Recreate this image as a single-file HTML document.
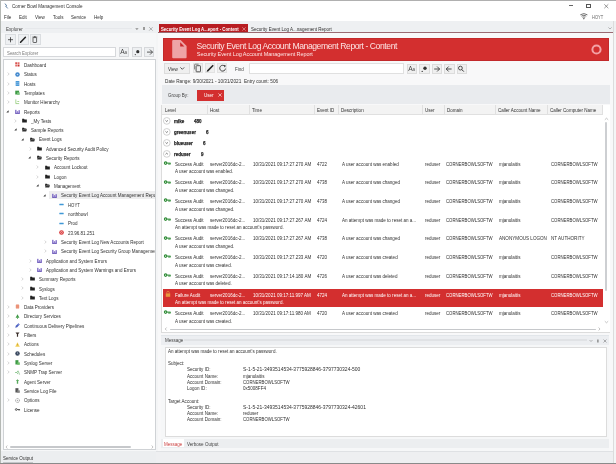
<!DOCTYPE html>
<html><head><meta charset="utf-8"><style>
html,body{margin:0;padding:0;width:616px;height:464px;overflow:hidden;background:#fff}
body{position:relative;font-family:"Liberation Sans", sans-serif}
body div, body svg{position:absolute}
body svg{overflow:visible}
.t{white-space:nowrap;line-height:1;transform-origin:0 0}
</style></head><body><div id="root" style="left:0;top:0;width:616px;height:464px;will-change:transform">
<div style="left:0px;top:0px;width:616px;height:20.6px;background:#fff"></div>
<svg style="left:3px;top:2px" width="6" height="8" viewBox="0 0 6 8"><path d="M2 1.6 L3.6 3.7 L2.7 4.1 L4.7 6.4" stroke="#4d7096" stroke-width="0.9" fill="none"/></svg>
<div class="t" style="left:11.70px;top:4.24px;font-size:5.6px;transform:scaleX(0.81);color:#303030;font-weight:normal;">Corner Bowl Management Console</div>
<div style="left:569.2px;top:5.3px;width:4.1px;height:0.6px;background:#666"></div>
<div style="left:586.3px;top:4.3px;width:4.6px;height:3.5px;border:0.55px solid #555;box-sizing:border-box"></div>
<svg style="left:604.3px;top:4.1px" width="5" height="5" viewBox="0 0 5 5"><path d="M0.3 0.3L4.3 4.2M4.3 0.3L0.3 4.2" stroke="#555" stroke-width="0.6"/></svg>
<div class="t" style="left:4.30px;top:15.44px;font-size:5.6px;transform:scaleX(0.81);color:#303030;font-weight:normal;">File</div>
<div class="t" style="left:19.10px;top:15.44px;font-size:5.6px;transform:scaleX(0.81);color:#303030;font-weight:normal;">Edit</div>
<div class="t" style="left:34.70px;top:15.44px;font-size:5.6px;transform:scaleX(0.81);color:#303030;font-weight:normal;">View</div>
<div class="t" style="left:52.60px;top:15.44px;font-size:5.6px;transform:scaleX(0.81);color:#303030;font-weight:normal;">Tools</div>
<div class="t" style="left:71.20px;top:15.44px;font-size:5.6px;transform:scaleX(0.81);color:#303030;font-weight:normal;">Service</div>
<div class="t" style="left:93.60px;top:15.44px;font-size:5.6px;transform:scaleX(0.81);color:#303030;font-weight:normal;">Help</div>
<svg style="left:579.8px;top:13.2px" width="8" height="7" viewBox="0 0 8 7"><path d="M0.3 1.8 Q3.85 -0.6 7.4 1.8" stroke="#333" stroke-width="0.7" fill="none"/><path d="M1.4 3.1 Q3.85 1.4 6.3 3.1" stroke="#333" stroke-width="0.7" fill="none"/><path d="M2.5 4.3 Q3.85 3.5 5.2 4.3" stroke="#333" stroke-width="0.7" fill="none"/><path d="M2.9 5.2 L3.85 6.4 L4.8 5.2 Z" fill="#333"/></svg>
<div class="t" style="left:591.60px;top:15.14px;font-size:5.6px;transform:scaleX(0.72);color:#666;font-weight:normal;">HOYT</div>
<div style="left:1px;top:20.6px;width:155px;height:443px;background:#f6f7f8"></div>
<div style="left:1px;top:20.6px;width:155px;height:12.2px;background:#eef0f2"></div>
<div class="t" style="left:5.50px;top:27.04px;font-size:5.6px;transform:scaleX(0.81);color:#444;font-weight:normal;">Explorer</div>
<div style="left:25px;top:27.6px;width:107px;height:1.6px;background:#e6e8eb"></div>
<svg style="left:135px;top:27.7px" width="4" height="3" viewBox="0 0 4 3"><path d="M0.2 0.3H3.6L1.9 2Z" fill="#8a8a8a"/></svg>
<div style="left:143px;top:26.7px;width:1.8px;height:3.3px;background:#9a9a9a"></div>
<svg style="left:149.2px;top:26.7px" width="4" height="4" viewBox="0 0 4 4"><path d="M0.2 0.2L3.6 3.6M3.6 0.2L0.2 3.6" stroke="#777" stroke-width="0.55"/></svg>
<div style="left:5.3px;top:34px;width:10.5px;height:10.6px;background:#eef0f2;border:0.6px solid #dadde0;box-sizing:border-box"></div>
<div style="left:18px;top:34px;width:10.5px;height:10.6px;background:#eef0f2;border:0.6px solid #dadde0;box-sizing:border-box"></div>
<div style="left:30.3px;top:34px;width:10.5px;height:10.6px;background:#eef0f2;border:0.6px solid #dadde0;box-sizing:border-box"></div>
<svg style="left:5.3px;top:34px" width="36" height="11" viewBox="0 0 36 11"><path d="M5.5 3.2V8.3M3 5.7H8" stroke="#333" stroke-width="0.8"/><path d="M15.6 8.2L20.4 3.3" stroke="#222" stroke-width="1.5" stroke-linecap="round"/><path d="M14.9 8.9L15.3 7.6L16.2 8.5Z" fill="#222"/><rect x="28" y="3.6" width="3.6" height="4.9" rx="0.5" fill="none" stroke="#444" stroke-width="0.8"/><path d="M27.3 3.1H32.3M28.9 2.5H30.7" stroke="#444" stroke-width="0.7"/></svg>
<div style="left:3px;top:47.3px;width:113px;height:10.2px;background:#fff;border:0.6px solid #d6d8db;box-sizing:border-box"></div>
<div class="t" style="left:7.00px;top:50.54px;font-size:5.6px;transform:scaleX(0.78);color:#7a7a7a;font-weight:normal;">Search Explorer</div>
<div style="left:118.5px;top:47px;width:10.5px;height:10.2px;background:#eef0f2;border:0.6px solid #d6d8db;box-sizing:border-box"></div>
<div style="left:131.5px;top:47px;width:10.5px;height:10.2px;background:#eef0f2;border:0.6px solid #d6d8db;box-sizing:border-box"></div>
<div style="left:143.5px;top:47px;width:10.5px;height:10.2px;background:#eef0f2;border:0.6px solid #d6d8db;box-sizing:border-box"></div>
<svg style="left:118.5px;top:47px" width="11" height="10" viewBox="0 0 11 10"><text x="1.3" y="7.4" font-family="Liberation Sans" font-size="6.6" fill="#444">A</text><text x="5.6" y="7.4" font-family="Liberation Sans" font-size="4.6" fill="#555">a</text></svg>
<svg style="left:131.5px;top:47px" width="23" height="11" viewBox="0 0 23 11"><circle cx="5.8" cy="4.7" r="1.6" fill="#333"/><circle cx="3.3" cy="7.6" r="0.6" fill="#333"/><path d="M15 5.1H20.5M18 2.6L20.5 5.1L18 7.6" stroke="#333" stroke-width="0.8" fill="none"/></svg>
<div style="left:2.8px;top:59.3px;width:152.8px;height:391.2px;background:#fff;border:0.7px solid #cfd2d5;box-sizing:border-box"></div>
<div style="left:3.6px;top:60px;width:151.3px;height:386px;overflow:hidden">
<svg style="left:11.50px;top:2.20px" width="5" height="5" viewBox="0 0 6 6"><rect x="0.3" y="0.3" width="2.3" height="2.3" fill="#d9534f"/><rect x="3.1" y="0.3" width="2.3" height="2.3" fill="#e06b67"/><rect x="0.3" y="3.1" width="2.3" height="2.3" fill="#e06b67"/><rect x="3.1" y="3.1" width="2.3" height="2.3" fill="#c9302c"/></svg>
<div class="t" style="left:20.40px;top:2.94px;font-size:5.6px;transform:scaleX(0.81);color:#303030;font-weight:normal;white-space:nowrap">Dashboard</div>
<svg style="left:3.00px;top:12.22px" width="3" height="4" viewBox="0 0 3 4"><path d="M0.6 0.6L2.2 2L0.6 3.4" fill="none" stroke="#b0b0b0" stroke-width="0.5"/></svg>
<svg style="left:11.50px;top:11.52px" width="5" height="5" viewBox="0 0 6 6"><circle cx="3" cy="3" r="2.7" fill="#3f86cc"/><circle cx="3" cy="3" r="1" fill="#b8d6f2"/></svg>
<div class="t" style="left:20.40px;top:12.26px;font-size:5.6px;transform:scaleX(0.81);color:#303030;font-weight:normal;white-space:nowrap">Status</div>
<svg style="left:3.00px;top:21.53px" width="3" height="4" viewBox="0 0 3 4"><path d="M0.6 0.6L2.2 2L0.6 3.4" fill="none" stroke="#b0b0b0" stroke-width="0.5"/></svg>
<svg style="left:11.50px;top:20.83px" width="5" height="5" viewBox="0 0 6 6"><rect x="0.8" y="0" width="4.4" height="6" fill="#4a9ad8"/><path d="M0.8 2H5.2M0.8 4H5.2" stroke="#c8e2f6" stroke-width="0.5"/></svg>
<div class="t" style="left:20.40px;top:21.57px;font-size:5.6px;transform:scaleX(0.81);color:#303030;font-weight:normal;white-space:nowrap">Hosts</div>
<svg style="left:3.00px;top:30.85px" width="3" height="4" viewBox="0 0 3 4"><path d="M0.6 0.6L2.2 2L0.6 3.4" fill="none" stroke="#b0b0b0" stroke-width="0.5"/></svg>
<svg style="left:11.50px;top:30.15px" width="5" height="5" viewBox="0 0 6 6"><rect x="0.3" y="0.8" width="4.6" height="4.6" fill="#3f9a46"/><rect x="2.5" y="2.8" width="3.2" height="3" fill="#7cc47f"/></svg>
<div class="t" style="left:20.40px;top:30.89px;font-size:5.6px;transform:scaleX(0.81);color:#303030;font-weight:normal;white-space:nowrap">Templates</div>
<svg style="left:3.00px;top:40.16px" width="3" height="4" viewBox="0 0 3 4"><path d="M0.6 0.6L2.2 2L0.6 3.4" fill="none" stroke="#b0b0b0" stroke-width="0.5"/></svg>
<svg style="left:11.50px;top:39.46px" width="5" height="5" viewBox="0 0 6 6"><path d="M1 0.5V5.5H5M2.8 3H5" stroke="#7bbf5e" stroke-width="0.8" fill="none"/></svg>
<div class="t" style="left:20.40px;top:40.20px;font-size:5.6px;transform:scaleX(0.81);color:#303030;font-weight:normal;white-space:nowrap">Monitor Hierarchy</div>
<svg style="left:2.70px;top:49.78px" width="3" height="3" viewBox="0 0 3 3"><path d="M2.6 0.3V2.6H0.3Z" fill="#333"/></svg>
<svg style="left:11.50px;top:48.78px" width="5" height="5" viewBox="0 0 6 6"><rect x="0.2" y="4.6" width="5.6" height="1.2" fill="#5e4bb0"/><rect x="0.3" y="1" width="1.4" height="4" fill="#6a55bd"/><rect x="2.3" y="2.6" width="1.4" height="2.4" fill="#8f7bd2"/><rect x="4.3" y="1.4" width="1.4" height="3.6" fill="#6a55bd"/></svg>
<div class="t" style="left:20.40px;top:49.52px;font-size:5.6px;transform:scaleX(0.81);color:#303030;font-weight:normal;white-space:nowrap">Reports</div>
<svg style="left:10.40px;top:58.80px" width="3" height="4" viewBox="0 0 3 4"><path d="M0.6 0.6L2.2 2L0.6 3.4" fill="none" stroke="#b0b0b0" stroke-width="0.5"/></svg>
<svg style="left:18.90px;top:58.10px" width="5" height="5" viewBox="0 0 6 6"><path d="M0.2 1H2.4L3 1.8H5.8V5.4H0.2Z" fill="#222"/></svg>
<div class="t" style="left:27.80px;top:58.84px;font-size:5.6px;transform:scaleX(0.81);color:#303030;font-weight:normal;white-space:nowrap">_My Tests</div>
<svg style="left:10.10px;top:68.41px" width="3" height="3" viewBox="0 0 3 3"><path d="M2.6 0.3V2.6H0.3Z" fill="#333"/></svg>
<svg style="left:18.90px;top:67.41px" width="5" height="5" viewBox="0 0 6 6"><path d="M0.2 1H2.4L3 1.8H5.2V2.6H1.4L0.2 5.4Z" fill="#222"/><path d="M1.4 2.8H6L5 5.4H0.2Z" fill="#333"/></svg>
<div class="t" style="left:27.80px;top:68.15px;font-size:5.6px;transform:scaleX(0.81);color:#303030;font-weight:normal;white-space:nowrap">Sample Reports</div>
<svg style="left:17.50px;top:77.73px" width="3" height="3" viewBox="0 0 3 3"><path d="M2.6 0.3V2.6H0.3Z" fill="#333"/></svg>
<svg style="left:26.30px;top:76.73px" width="5" height="5" viewBox="0 0 6 6"><path d="M0.2 1H2.4L3 1.8H5.2V2.6H1.4L0.2 5.4Z" fill="#222"/><path d="M1.4 2.8H6L5 5.4H0.2Z" fill="#333"/></svg>
<div class="t" style="left:35.20px;top:77.47px;font-size:5.6px;transform:scaleX(0.81);color:#303030;font-weight:normal;white-space:nowrap">Event Logs</div>
<svg style="left:25.20px;top:86.74px" width="3" height="4" viewBox="0 0 3 4"><path d="M0.6 0.6L2.2 2L0.6 3.4" fill="none" stroke="#b0b0b0" stroke-width="0.5"/></svg>
<svg style="left:33.70px;top:86.04px" width="5" height="5" viewBox="0 0 6 6"><path d="M0.2 1H2.4L3 1.8H5.8V5.4H0.2Z" fill="#222"/></svg>
<div class="t" style="left:42.60px;top:86.78px;font-size:5.6px;transform:scaleX(0.81);color:#303030;font-weight:normal;white-space:nowrap">Advanced Security Audit Policy</div>
<svg style="left:24.90px;top:96.36px" width="3" height="3" viewBox="0 0 3 3"><path d="M2.6 0.3V2.6H0.3Z" fill="#333"/></svg>
<svg style="left:33.70px;top:95.36px" width="5" height="5" viewBox="0 0 6 6"><path d="M0.2 1H2.4L3 1.8H5.2V2.6H1.4L0.2 5.4Z" fill="#222"/><path d="M1.4 2.8H6L5 5.4H0.2Z" fill="#333"/></svg>
<div class="t" style="left:42.60px;top:96.10px;font-size:5.6px;transform:scaleX(0.81);color:#303030;font-weight:normal;white-space:nowrap">Security Reports</div>
<svg style="left:32.60px;top:105.38px" width="3" height="4" viewBox="0 0 3 4"><path d="M0.6 0.6L2.2 2L0.6 3.4" fill="none" stroke="#b0b0b0" stroke-width="0.5"/></svg>
<svg style="left:41.10px;top:104.68px" width="5" height="5" viewBox="0 0 6 6"><path d="M0.2 1H2.4L3 1.8H5.8V5.4H0.2Z" fill="#222"/></svg>
<div class="t" style="left:50.00px;top:105.42px;font-size:5.6px;transform:scaleX(0.81);color:#303030;font-weight:normal;white-space:nowrap">Account Lockout</div>
<svg style="left:32.60px;top:114.69px" width="3" height="4" viewBox="0 0 3 4"><path d="M0.6 0.6L2.2 2L0.6 3.4" fill="none" stroke="#b0b0b0" stroke-width="0.5"/></svg>
<svg style="left:41.10px;top:113.99px" width="5" height="5" viewBox="0 0 6 6"><path d="M0.2 1H2.4L3 1.8H5.8V5.4H0.2Z" fill="#222"/></svg>
<div class="t" style="left:50.00px;top:114.73px;font-size:5.6px;transform:scaleX(0.81);color:#303030;font-weight:normal;white-space:nowrap">Logon</div>
<svg style="left:32.30px;top:124.31px" width="3" height="3" viewBox="0 0 3 3"><path d="M2.6 0.3V2.6H0.3Z" fill="#333"/></svg>
<svg style="left:41.10px;top:123.31px" width="5" height="5" viewBox="0 0 6 6"><path d="M0.2 1H2.4L3 1.8H5.2V2.6H1.4L0.2 5.4Z" fill="#222"/><path d="M1.4 2.8H6L5 5.4H0.2Z" fill="#333"/></svg>
<div class="t" style="left:50.00px;top:124.05px;font-size:5.6px;transform:scaleX(0.81);color:#303030;font-weight:normal;white-space:nowrap">Management</div>
<div style="left:45.0px;top:130.72400000000002px;width:110px;height:8.6px;background:#eeeeef"></div>
<svg style="left:39.70px;top:133.62px" width="3" height="3" viewBox="0 0 3 3"><path d="M2.6 0.3V2.6H0.3Z" fill="#333"/></svg>
<svg style="left:48.50px;top:132.62px" width="5" height="5" viewBox="0 0 6 6"><rect x="0.2" y="4.6" width="5.6" height="1.2" fill="#5e4bb0"/><rect x="0.3" y="1" width="1.4" height="4" fill="#6a55bd"/><rect x="2.3" y="2.6" width="1.4" height="2.4" fill="#8f7bd2"/><rect x="4.3" y="1.4" width="1.4" height="3.6" fill="#6a55bd"/></svg>
<div class="t" style="left:57.40px;top:133.36px;font-size:5.6px;transform:scaleX(0.81);color:#303030;font-weight:normal;white-space:nowrap">Security Event Log Account Management Report</div>
<svg style="left:55.90px;top:141.94px" width="5" height="5" viewBox="0 0 6 6"><rect x="0.4" y="2.1" width="5.2" height="1.9" rx="0.4" fill="#3f98d6"/></svg>
<div class="t" style="left:64.80px;top:142.68px;font-size:5.6px;transform:scaleX(0.765);color:#303030;font-weight:normal;white-space:nowrap">HOYT</div>
<svg style="left:55.90px;top:151.26px" width="5" height="5" viewBox="0 0 6 6"><rect x="0.4" y="2.1" width="5.2" height="1.9" rx="0.4" fill="#3f98d6"/></svg>
<div class="t" style="left:64.80px;top:152.00px;font-size:5.6px;transform:scaleX(0.81);color:#303030;font-weight:normal;white-space:nowrap">northbowl</div>
<svg style="left:55.90px;top:160.57px" width="5" height="5" viewBox="0 0 6 6"><rect x="0.4" y="2.1" width="5.2" height="1.9" rx="0.4" fill="#3f98d6"/></svg>
<div class="t" style="left:64.80px;top:161.31px;font-size:5.6px;transform:scaleX(0.81);color:#303030;font-weight:normal;white-space:nowrap">Prod</div>
<svg style="left:55.90px;top:169.89px" width="5" height="5" viewBox="0 0 6 6"><circle cx="3" cy="3" r="2.8" fill="#d9383a"/><circle cx="3" cy="3" r="1.4" fill="#f6c4c4"/><circle cx="3" cy="3" r="0.7" fill="#d9383a"/></svg>
<div class="t" style="left:64.80px;top:170.63px;font-size:5.6px;transform:scaleX(0.81);color:#303030;font-weight:normal;white-space:nowrap">23.96.81.251</div>
<svg style="left:40.00px;top:179.90px" width="3" height="4" viewBox="0 0 3 4"><path d="M0.6 0.6L2.2 2L0.6 3.4" fill="none" stroke="#b0b0b0" stroke-width="0.5"/></svg>
<svg style="left:48.50px;top:179.20px" width="5" height="5" viewBox="0 0 6 6"><rect x="0.2" y="4.6" width="5.6" height="1.2" fill="#5e4bb0"/><rect x="0.3" y="1" width="1.4" height="4" fill="#6a55bd"/><rect x="2.3" y="2.6" width="1.4" height="2.4" fill="#8f7bd2"/><rect x="4.3" y="1.4" width="1.4" height="3.6" fill="#6a55bd"/></svg>
<div class="t" style="left:57.40px;top:179.94px;font-size:5.6px;transform:scaleX(0.81);color:#303030;font-weight:normal;white-space:nowrap">Security Event Log New Accounts Report</div>
<svg style="left:40.00px;top:189.22px" width="3" height="4" viewBox="0 0 3 4"><path d="M0.6 0.6L2.2 2L0.6 3.4" fill="none" stroke="#b0b0b0" stroke-width="0.5"/></svg>
<svg style="left:48.50px;top:188.52px" width="5" height="5" viewBox="0 0 6 6"><rect x="0.2" y="4.6" width="5.6" height="1.2" fill="#5e4bb0"/><rect x="0.3" y="1" width="1.4" height="4" fill="#6a55bd"/><rect x="2.3" y="2.6" width="1.4" height="2.4" fill="#8f7bd2"/><rect x="4.3" y="1.4" width="1.4" height="3.6" fill="#6a55bd"/></svg>
<div class="t" style="left:57.40px;top:189.26px;font-size:5.6px;transform:scaleX(0.81);color:#303030;font-weight:normal;white-space:nowrap">Security Event Log Security Group Management Report</div>
<svg style="left:25.20px;top:198.54px" width="3" height="4" viewBox="0 0 3 4"><path d="M0.6 0.6L2.2 2L0.6 3.4" fill="none" stroke="#b0b0b0" stroke-width="0.5"/></svg>
<svg style="left:33.70px;top:197.84px" width="5" height="5" viewBox="0 0 6 6"><rect x="0.2" y="4.6" width="5.6" height="1.2" fill="#5e4bb0"/><rect x="0.3" y="1" width="1.4" height="4" fill="#6a55bd"/><rect x="2.3" y="2.6" width="1.4" height="2.4" fill="#8f7bd2"/><rect x="4.3" y="1.4" width="1.4" height="3.6" fill="#6a55bd"/></svg>
<div class="t" style="left:42.60px;top:198.58px;font-size:5.6px;transform:scaleX(0.81);color:#303030;font-weight:normal;white-space:nowrap">Application and System Errors</div>
<svg style="left:25.20px;top:207.85px" width="3" height="4" viewBox="0 0 3 4"><path d="M0.6 0.6L2.2 2L0.6 3.4" fill="none" stroke="#b0b0b0" stroke-width="0.5"/></svg>
<svg style="left:33.70px;top:207.15px" width="5" height="5" viewBox="0 0 6 6"><rect x="0.2" y="4.6" width="5.6" height="1.2" fill="#5e4bb0"/><rect x="0.3" y="1" width="1.4" height="4" fill="#6a55bd"/><rect x="2.3" y="2.6" width="1.4" height="2.4" fill="#8f7bd2"/><rect x="4.3" y="1.4" width="1.4" height="3.6" fill="#6a55bd"/></svg>
<div class="t" style="left:42.60px;top:207.89px;font-size:5.6px;transform:scaleX(0.81);color:#303030;font-weight:normal;white-space:nowrap">Application and System Warnings and Errors</div>
<svg style="left:17.80px;top:217.17px" width="3" height="4" viewBox="0 0 3 4"><path d="M0.6 0.6L2.2 2L0.6 3.4" fill="none" stroke="#b0b0b0" stroke-width="0.5"/></svg>
<svg style="left:26.30px;top:216.47px" width="5" height="5" viewBox="0 0 6 6"><path d="M0.2 1H2.4L3 1.8H5.8V5.4H0.2Z" fill="#222"/></svg>
<div class="t" style="left:35.20px;top:217.21px;font-size:5.6px;transform:scaleX(0.81);color:#303030;font-weight:normal;white-space:nowrap">Summary Reports</div>
<svg style="left:17.80px;top:226.48px" width="3" height="4" viewBox="0 0 3 4"><path d="M0.6 0.6L2.2 2L0.6 3.4" fill="none" stroke="#b0b0b0" stroke-width="0.5"/></svg>
<svg style="left:26.30px;top:225.78px" width="5" height="5" viewBox="0 0 6 6"><path d="M0.2 1H2.4L3 1.8H5.8V5.4H0.2Z" fill="#222"/></svg>
<div class="t" style="left:35.20px;top:226.52px;font-size:5.6px;transform:scaleX(0.81);color:#303030;font-weight:normal;white-space:nowrap">Syslogs</div>
<svg style="left:17.80px;top:235.80px" width="3" height="4" viewBox="0 0 3 4"><path d="M0.6 0.6L2.2 2L0.6 3.4" fill="none" stroke="#b0b0b0" stroke-width="0.5"/></svg>
<svg style="left:26.30px;top:235.10px" width="5" height="5" viewBox="0 0 6 6"><path d="M0.2 1H2.4L3 1.8H5.8V5.4H0.2Z" fill="#222"/></svg>
<div class="t" style="left:35.20px;top:235.84px;font-size:5.6px;transform:scaleX(0.81);color:#303030;font-weight:normal;white-space:nowrap">Text Logs</div>
<svg style="left:3.00px;top:245.12px" width="3" height="4" viewBox="0 0 3 4"><path d="M0.6 0.6L2.2 2L0.6 3.4" fill="none" stroke="#b0b0b0" stroke-width="0.5"/></svg>
<svg style="left:11.50px;top:244.42px" width="5" height="5" viewBox="0 0 6 6"><rect x="1" y="0.5" width="4" height="5" rx="0.8" fill="#e8866a"/><path d="M1 2.2H5M1 3.8H5" stroke="#f6c3b3" stroke-width="0.4"/></svg>
<div class="t" style="left:20.40px;top:245.16px;font-size:5.6px;transform:scaleX(0.81);color:#303030;font-weight:normal;white-space:nowrap">Data Providers</div>
<svg style="left:3.00px;top:254.43px" width="3" height="4" viewBox="0 0 3 4"><path d="M0.6 0.6L2.2 2L0.6 3.4" fill="none" stroke="#b0b0b0" stroke-width="0.5"/></svg>
<svg style="left:11.50px;top:253.73px" width="5" height="5" viewBox="0 0 6 6"><path d="M3 0.3L5.3 4.5H0.7Z" fill="#3f9a46"/><rect x="2.5" y="4.4" width="1" height="1.4" fill="#3f9a46"/></svg>
<div class="t" style="left:20.40px;top:254.47px;font-size:5.6px;transform:scaleX(0.81);color:#303030;font-weight:normal;white-space:nowrap">Directory Services</div>
<svg style="left:3.00px;top:263.75px" width="3" height="4" viewBox="0 0 3 4"><path d="M0.6 0.6L2.2 2L0.6 3.4" fill="none" stroke="#b0b0b0" stroke-width="0.5"/></svg>
<svg style="left:11.50px;top:263.05px" width="5" height="5" viewBox="0 0 6 6"><path d="M0.3 5.7L1 3.4L4.2 0.3L5.7 1.8L2.6 5Z" fill="#4a5fc0"/><circle cx="3.9" cy="2.1" r="0.6" fill="#aab8f0"/></svg>
<div class="t" style="left:20.40px;top:263.79px;font-size:5.6px;transform:scaleX(0.81);color:#303030;font-weight:normal;white-space:nowrap">Continuous Delivery Pipelines</div>
<svg style="left:3.00px;top:273.06px" width="3" height="4" viewBox="0 0 3 4"><path d="M0.6 0.6L2.2 2L0.6 3.4" fill="none" stroke="#b0b0b0" stroke-width="0.5"/></svg>
<svg style="left:11.50px;top:272.36px" width="5" height="5" viewBox="0 0 6 6"><path d="M0.6 0.6H5.4L3.7 2.6V5.6H2.3V2.6Z" fill="#3a2e2a"/></svg>
<div class="t" style="left:20.40px;top:273.10px;font-size:5.6px;transform:scaleX(0.81);color:#303030;font-weight:normal;white-space:nowrap">Filters</div>
<svg style="left:3.00px;top:282.38px" width="3" height="4" viewBox="0 0 3 4"><path d="M0.6 0.6L2.2 2L0.6 3.4" fill="none" stroke="#b0b0b0" stroke-width="0.5"/></svg>
<svg style="left:11.50px;top:281.68px" width="5" height="5" viewBox="0 0 6 6"><path d="M3 0.4L5.8 5.6H0.2Z" fill="#f2cf5a"/><rect x="2.7" y="2.2" width="0.6" height="1.8" fill="#b08a20"/></svg>
<div class="t" style="left:20.40px;top:282.42px;font-size:5.6px;transform:scaleX(0.81);color:#303030;font-weight:normal;white-space:nowrap">Actions</div>
<svg style="left:3.00px;top:291.70px" width="3" height="4" viewBox="0 0 3 4"><path d="M0.6 0.6L2.2 2L0.6 3.4" fill="none" stroke="#b0b0b0" stroke-width="0.5"/></svg>
<svg style="left:11.50px;top:291.00px" width="5" height="5" viewBox="0 0 6 6"><circle cx="3" cy="3" r="2.7" fill="#3b4a60"/><path d="M3 1.5V3.2L4 3.8" stroke="#c8d0dc" stroke-width="0.6" fill="none"/></svg>
<div class="t" style="left:20.40px;top:291.74px;font-size:5.6px;transform:scaleX(0.81);color:#303030;font-weight:normal;white-space:nowrap">Schedules</div>
<svg style="left:3.00px;top:301.01px" width="3" height="4" viewBox="0 0 3 4"><path d="M0.6 0.6L2.2 2L0.6 3.4" fill="none" stroke="#b0b0b0" stroke-width="0.5"/></svg>
<svg style="left:11.50px;top:300.31px" width="5" height="5" viewBox="0 0 6 6"><rect x="0.5" y="0.2" width="3.6" height="5.2" fill="#3f9a46"/><rect x="2.8" y="2.8" width="3" height="3" fill="#6fbf6a"/></svg>
<div class="t" style="left:20.40px;top:301.05px;font-size:5.6px;transform:scaleX(0.81);color:#303030;font-weight:normal;white-space:nowrap">Syslog Server</div>
<svg style="left:3.00px;top:310.33px" width="3" height="4" viewBox="0 0 3 4"><path d="M0.6 0.6L2.2 2L0.6 3.4" fill="none" stroke="#b0b0b0" stroke-width="0.5"/></svg>
<svg style="left:11.50px;top:309.63px" width="5" height="5" viewBox="0 0 6 6"><path d="M0 3H2.2M2.2 3L3.5 1M2.2 3L3.5 5M3.7 1L5.5 5.5" stroke="#56a85a" stroke-width="0.7" fill="none"/></svg>
<div class="t" style="left:20.40px;top:310.37px;font-size:5.6px;transform:scaleX(0.81);color:#303030;font-weight:normal;white-space:nowrap">SNMP Trap Server</div>
<svg style="left:11.50px;top:318.94px" width="5" height="5" viewBox="0 0 6 6"><path d="M3 0.3L5 2.5H3.8V5.8H2.2V2.5H1Z" fill="#56a85a"/></svg>
<div class="t" style="left:20.40px;top:319.68px;font-size:5.6px;transform:scaleX(0.81);color:#303030;font-weight:normal;white-space:nowrap">Agent Server</div>
<svg style="left:11.50px;top:328.26px" width="5" height="5" viewBox="0 0 6 6"><rect x="0.5" y="0.2" width="3.6" height="5.2" fill="#555"/><rect x="2.8" y="2.8" width="3" height="3" fill="#888"/></svg>
<div class="t" style="left:20.40px;top:329.00px;font-size:5.6px;transform:scaleX(0.81);color:#303030;font-weight:normal;white-space:nowrap">Service Log File</div>
<svg style="left:3.00px;top:338.28px" width="3" height="4" viewBox="0 0 3 4"><path d="M0.6 0.6L2.2 2L0.6 3.4" fill="none" stroke="#b0b0b0" stroke-width="0.5"/></svg>
<svg style="left:11.50px;top:337.58px" width="5" height="5" viewBox="0 0 6 6"><circle cx="3" cy="3" r="2.4" fill="none" stroke="#8a8a8a" stroke-width="1.1" stroke-dasharray="1 0.6"/><circle cx="3" cy="3" r="0.9" fill="#aaa"/></svg>
<div class="t" style="left:20.40px;top:338.32px;font-size:5.6px;transform:scaleX(0.81);color:#303030;font-weight:normal;white-space:nowrap">Options</div>
<svg style="left:11.50px;top:346.89px" width="5" height="5" viewBox="0 0 6 6"><circle cx="1.5" cy="3" r="1.1" fill="none" stroke="#222" stroke-width="0.8"/><path d="M2.6 3H5.8M4.6 3V4.3M5.5 3V4" stroke="#222" stroke-width="0.8"/></svg>
<div class="t" style="left:20.40px;top:347.63px;font-size:5.6px;transform:scaleX(0.81);color:#303030;font-weight:normal;white-space:nowrap">License</div>
</div>
<svg style="left:5px;top:445px" width="150" height="4" viewBox="0 0 150 4"><path d="M2.3 0.5L1 2L2.3 3.5" stroke="#888" stroke-width="0.5" fill="none"/><path d="M146.7 0.5L148 2L146.7 3.5" stroke="#888" stroke-width="0.5" fill="none"/></svg>
<div style="left:9.9px;top:446.4px;width:120.7px;height:1.2px;background:#c6c8cb;border-radius:1px"></div>
<div style="left:1.1px;top:450.6px;width:155px;height:12.4px;background:#eceef0"></div>
<div class="t" style="left:3.00px;top:455.94px;font-size:5.6px;transform:scaleX(0.81);color:#303030;font-weight:normal;">Service Output</div>
<div style="left:3px;top:461.6px;width:30px;height:1.6px;background:#c4c6c9"></div>
<div style="left:156px;top:20.6px;width:460px;height:443px;background:#f4f5f6"></div>
<div style="left:155.6px;top:20.6px;width:460.4px;height:12px;background:#eef0f2"></div>
<div style="left:158.5px;top:24px;width:89.5px;height:8.4px;background:#b81d22"></div>
<div class="t" style="left:160.50px;top:26.84px;font-size:5.6px;transform:scaleX(0.77);color:#fff;font-weight:bold;">Security Event Log A...eport - Content</div>
<svg style="left:241.8px;top:26.6px" width="4" height="4" viewBox="0 0 4 4"><path d="M0.3 0.3L3.7 3.7M3.7 0.3L0.3 3.7" stroke="#f3b0b0" stroke-width="0.6"/></svg>
<div class="t" style="left:250.80px;top:27.04px;font-size:5.6px;transform:scaleX(0.81);color:#303030;font-weight:normal;">Security Event Log A...nagement Report</div>
<svg style="left:607.8px;top:27.3px" width="4" height="3" viewBox="0 0 4 3"><path d="M0.4 0.4L2 2L3.6 0.4" stroke="#777" stroke-width="0.5" fill="none"/></svg>
<div style="left:158px;top:32.1px;width:455px;height:1.1px;background:#9a6a72"></div>
<div style="left:158px;top:33.1px;width:455px;height:430px;background:#f8f8f9"></div>
<div style="left:613px;top:20.6px;width:1px;height:443px;background:#dcdcdc"></div>
<div style="left:162.6px;top:37.5px;width:446.8px;height:23.4px;background:#d32f2f;border:0.8px solid #c2292b;box-sizing:border-box"></div>
<svg style="left:171.9px;top:40.2px" width="15" height="18.5" viewBox="0 0 15 18.5"><path d="M1.2 0H8.6L14.6 6V17.2Q14.6 18.2 13.6 18.2H1.2Q0.2 18.2 0.2 17.2V1Q0.2 0 1.2 0Z" fill="#eea4a6"/><path d="M8.2 2.2V6.4H12.4Z" fill="#c8282c"/></svg>
<div class="t" style="left:196.60px;top:41.99px;font-size:8.6px;letter-spacing:-0.43px;color:#fde4e4;font-weight:normal;">Security Event Log Account Management Report - Content</div>
<div class="t" style="left:196.80px;top:52.20px;font-size:5.5px;letter-spacing:-0.07px;color:#fde4e4;font-weight:normal;">Security Event Log Account Management Report</div>
<svg style="left:591.3px;top:43.6px" width="11" height="11" viewBox="0 0 11 11"><circle cx="5.5" cy="5.5" r="4.1" fill="none" stroke="#f3a2a6" stroke-width="2"/></svg>
<div style="left:164.3px;top:63.3px;width:25.5px;height:10.3px;background:#efefef;border:0.6px solid #dcdcdc;box-sizing:border-box"></div>
<div class="t" style="left:168.30px;top:66.84px;font-size:5.6px;transform:scaleX(0.81);color:#303030;font-weight:normal;">View</div>
<svg style="left:180px;top:67px" width="5" height="3" viewBox="0 0 5 3"><path d="M0.4 0.4L2.3 2.3L4.2 0.4" stroke="#333" stroke-width="0.8" fill="none"/></svg>
<div style="left:192.5px;top:63.2px;width:10.2px;height:10.2px;background:#efefef;border:0.6px solid #e2e2e2;box-sizing:border-box"></div>
<div style="left:204.5px;top:63.2px;width:10.2px;height:10.2px;background:#efefef;border:0.6px solid #e2e2e2;box-sizing:border-box"></div>
<div style="left:217.2px;top:63.2px;width:10.2px;height:10.2px;background:#efefef;border:0.6px solid #e2e2e2;box-sizing:border-box"></div>
<svg style="left:192.5px;top:63.2px" width="36" height="11" viewBox="0 0 36 11"><path d="M1.6 6.4V1.9Q1.6 1.2 2.3 1.2H5.6" stroke="#555" stroke-width="0.7" fill="none"/><rect x="3.1" y="2.7" width="4.4" height="6.1" rx="0.6" fill="#efefef" stroke="#333" stroke-width="0.8"/><path d="M14.4 8.1L20.2 2.3" stroke="#222" stroke-width="1.5"/><path d="M13.6 8.9L14.2 7.6L14.9 8.3Z" fill="#222"/><path d="M31.8 3.3A2.9 2.9 0 1 0 32.5 5.6" stroke="#333" stroke-width="0.9" fill="none"/><path d="M30.6 2.1L32.9 2.6L31.9 4.6Z" fill="#333"/></svg>
<div class="t" style="left:235.00px;top:66.84px;font-size:5.6px;transform:scaleX(0.81);color:#444;font-weight:normal;">Find</div>
<div style="left:248.6px;top:63.3px;width:155.6px;height:10.3px;background:#fff;border:0.7px solid #e0e0e0;box-sizing:border-box"></div>
<div style="left:406.8px;top:63.5px;width:10.5px;height:10px;background:#efefef;border:0.6px solid #dcdcdc;box-sizing:border-box"></div>
<div style="left:419.3px;top:63.5px;width:10.5px;height:10px;background:#efefef;border:0.6px solid #dcdcdc;box-sizing:border-box"></div>
<div style="left:431.8px;top:63.5px;width:10.5px;height:10px;background:#efefef;border:0.6px solid #dcdcdc;box-sizing:border-box"></div>
<div style="left:444.1px;top:63.5px;width:10.5px;height:10px;background:#efefef;border:0.6px solid #dcdcdc;box-sizing:border-box"></div>
<div style="left:456.6px;top:63.5px;width:10.5px;height:10px;background:#efefef;border:0.6px solid #dcdcdc;box-sizing:border-box"></div>
<svg style="left:406.8px;top:63.5px" width="11" height="10" viewBox="0 0 11 10"><text x="1.3" y="7.4" font-family="Liberation Sans" font-size="6.6" fill="#444">A</text><text x="5.6" y="7.4" font-family="Liberation Sans" font-size="4.6" fill="#555">a</text></svg>
<svg style="left:419.3px;top:63.5px" width="48" height="10" viewBox="0 0 48 10"><circle cx="6" cy="4.2" r="1.7" fill="#333"/><circle cx="3.2" cy="7.4" r="0.65" fill="#333"/><path d="M15.2 5H20.6M18.1 2.5L20.6 5L18.1 7.5" stroke="#333" stroke-width="0.85" fill="none"/><path d="M32.6 5H27.2M29.7 2.5L27.2 5L29.7 7.5" stroke="#333" stroke-width="0.85" fill="none"/><circle cx="41.4" cy="4.1" r="1.9" fill="none" stroke="#333" stroke-width="0.85"/><path d="M42.8 5.5L44.8 7.6" stroke="#333" stroke-width="1"/></svg>
<div class="t" style="left:165.00px;top:79.34px;font-size:5.6px;transform:scaleX(0.84);color:#303030;font-weight:normal;white-space:pre">Date Range: 9/30/2021 - 10/31/2021  Entry count: 506</div>
<div style="left:161.8px;top:85.2px;width:448px;height:19px;background:#e9ebee"></div>
<div class="t" style="left:168.30px;top:93.14px;font-size:5.6px;transform:scaleX(0.81);color:#444;font-weight:normal;">Group By:</div>
<div style="left:196.9px;top:89.5px;width:27.1px;height:11.3px;background:#d32f2f"></div>
<div class="t" style="left:204.00px;top:93.04px;font-size:5.6px;transform:scaleX(0.81);color:#fff;font-weight:normal;">User</div>
<svg style="left:218.2px;top:93.2px" width="4" height="4" viewBox="0 0 4 4"><path d="M0.4 0.4L3.6 3.6M3.6 0.4L0.4 3.6" stroke="#fff" stroke-width="0.6"/></svg>
<div style="left:161px;top:104.6px;width:448.5px;height:228.4px;background:#fff;border-left:0.7px solid #dcdcdc;border-bottom:0.6px solid #dcdcdc;box-sizing:border-box"></div>
<div style="left:162px;top:104.6px;width:440.4px;height:10.8px;background:#f3f3f3;border-bottom:0.6px solid #e0e0e0;box-sizing:border-box"></div>
<div class="t" style="left:165.00px;top:108.24px;font-size:5.6px;transform:scaleX(0.81);color:#303030;font-weight:normal;">Level</div>
<div style="left:206.6px;top:104.6px;width:0.6px;height:10.6px;background:#e0e0e0"></div>
<div class="t" style="left:209.60px;top:108.24px;font-size:5.6px;transform:scaleX(0.81);color:#303030;font-weight:normal;">Host</div>
<div style="left:248.5px;top:104.6px;width:0.6px;height:10.6px;background:#e0e0e0"></div>
<div class="t" style="left:251.50px;top:108.24px;font-size:5.6px;transform:scaleX(0.81);color:#303030;font-weight:normal;">Time</div>
<div style="left:314px;top:104.6px;width:0.6px;height:10.6px;background:#e0e0e0"></div>
<div class="t" style="left:317.00px;top:108.24px;font-size:5.6px;transform:scaleX(0.81);color:#303030;font-weight:normal;">Event ID</div>
<div style="left:338.3px;top:104.6px;width:0.6px;height:10.6px;background:#e0e0e0"></div>
<div class="t" style="left:341.30px;top:108.24px;font-size:5.6px;transform:scaleX(0.81);color:#303030;font-weight:normal;">Description</div>
<div style="left:421.6px;top:104.6px;width:0.6px;height:10.6px;background:#e0e0e0"></div>
<div class="t" style="left:424.60px;top:108.24px;font-size:5.6px;transform:scaleX(0.81);color:#303030;font-weight:normal;">User</div>
<div style="left:444px;top:104.6px;width:0.6px;height:10.6px;background:#e0e0e0"></div>
<div class="t" style="left:447.00px;top:108.24px;font-size:5.6px;transform:scaleX(0.81);color:#303030;font-weight:normal;">Domain</div>
<div style="left:495px;top:104.6px;width:0.6px;height:10.6px;background:#e0e0e0"></div>
<div class="t" style="left:498.00px;top:108.24px;font-size:5.6px;transform:scaleX(0.81);color:#303030;font-weight:normal;">Caller Account Name</div>
<div style="left:547px;top:104.6px;width:0.6px;height:10.6px;background:#e0e0e0"></div>
<div class="t" style="left:550.00px;top:108.24px;font-size:5.6px;transform:scaleX(0.81);color:#303030;font-weight:normal;">Caller Computer Name</div>
<div style="left:602.2px;top:104.6px;width:0.6px;height:10.8px;background:#e0e0e0"></div>
<svg style="left:163.1px;top:117.30px" width="8" height="8" viewBox="0 0 8 8"><circle cx="3.8" cy="3.9" r="3.35" fill="#fff" stroke="#bdbdbd" stroke-width="0.7"/><path d="M2.5 3.4L3.7 4.5L4.9 3.4" stroke="#444" stroke-width="0.7" fill="none"/></svg>
<div class="t" style="left:173.80px;top:119.34px;font-size:5.6px;transform:scaleX(0.81);color:#222;font-weight:bold;-webkit-text-stroke:0.25px #222">mike</div>
<div class="t" style="left:193.90px;top:119.34px;font-size:5.6px;transform:scaleX(0.81);color:#222;font-weight:bold;-webkit-text-stroke:0.25px #222">480</div>
<svg style="left:163.1px;top:128.30px" width="8" height="8" viewBox="0 0 8 8"><circle cx="3.8" cy="3.9" r="3.35" fill="#fff" stroke="#bdbdbd" stroke-width="0.7"/><path d="M2.5 3.4L3.7 4.5L4.9 3.4" stroke="#444" stroke-width="0.7" fill="none"/></svg>
<div class="t" style="left:173.80px;top:130.34px;font-size:5.6px;transform:scaleX(0.81);color:#222;font-weight:bold;-webkit-text-stroke:0.25px #222">greenuser</div>
<div class="t" style="left:205.60px;top:130.34px;font-size:5.6px;transform:scaleX(0.81);color:#222;font-weight:bold;-webkit-text-stroke:0.25px #222">6</div>
<svg style="left:163.1px;top:139.10px" width="8" height="8" viewBox="0 0 8 8"><circle cx="3.8" cy="3.9" r="3.35" fill="#fff" stroke="#bdbdbd" stroke-width="0.7"/><path d="M2.5 3.4L3.7 4.5L4.9 3.4" stroke="#444" stroke-width="0.7" fill="none"/></svg>
<div class="t" style="left:173.80px;top:141.14px;font-size:5.6px;transform:scaleX(0.81);color:#222;font-weight:bold;-webkit-text-stroke:0.25px #222">blueuser</div>
<div class="t" style="left:202.60px;top:141.14px;font-size:5.6px;transform:scaleX(0.81);color:#222;font-weight:bold;-webkit-text-stroke:0.25px #222">6</div>
<svg style="left:163.1px;top:150.00px" width="8" height="8" viewBox="0 0 8 8"><circle cx="3.8" cy="3.9" r="3.35" fill="#fff" stroke="#bdbdbd" stroke-width="0.7"/><path d="M2.5 4.3L3.7 3.2L4.9 4.3" stroke="#444" stroke-width="0.7" fill="none"/></svg>
<div class="t" style="left:173.80px;top:152.04px;font-size:5.6px;transform:scaleX(0.81);color:#222;font-weight:bold;-webkit-text-stroke:0.25px #222">reduser</div>
<div class="t" style="left:200.60px;top:152.04px;font-size:5.6px;transform:scaleX(0.81);color:#222;font-weight:bold;-webkit-text-stroke:0.25px #222">9</div>
<div style="left:162px;top:115.2px;width:440.6px;height:210px;overflow:hidden">
<svg style="left:2.20px;top:45.70px" width="7" height="5" viewBox="0 0 7 5"><circle cx="1.6" cy="2.1" r="1.2" fill="none" stroke="#2e8b35" stroke-width="1.15"/><path d="M2.8 2.1H6.6M5 2.1V3.9M6.2 2.1V3.5" stroke="#2e8b35" stroke-width="1"/></svg>
<div class="t" style="left:13.00px;top:46.44px;font-size:5.6px;transform:scaleX(0.81);color:#303030;font-weight:normal;white-space:pre">Success Audit</div>
<div class="t" style="left:47.60px;top:46.44px;font-size:5.6px;transform:scaleX(0.81);color:#303030;font-weight:normal;white-space:pre">server2016dc-2...</div>
<div class="t" style="left:90.50px;top:46.44px;font-size:5.6px;transform:scaleX(0.81);color:#303030;font-weight:normal;white-space:pre">10/31/2021 09:17:27.270 AM</div>
<div class="t" style="left:155.40px;top:46.44px;font-size:5.6px;transform:scaleX(0.81);color:#303030;font-weight:normal;white-space:pre">4722</div>
<div class="t" style="left:180.20px;top:46.44px;font-size:5.6px;transform:scaleX(0.81);color:#303030;font-weight:normal;white-space:pre">A user account was enabled</div>
<div class="t" style="left:263.20px;top:46.44px;font-size:5.6px;transform:scaleX(0.81);color:#303030;font-weight:normal;white-space:pre">reduser</div>
<div class="t" style="left:284.40px;top:46.44px;font-size:5.6px;transform:scaleX(0.765);color:#303030;font-weight:normal;white-space:pre">CORNERBOWLSOFTW</div>
<div class="t" style="left:336.70px;top:46.44px;font-size:5.6px;transform:scaleX(0.81);color:#303030;font-weight:normal;white-space:pre">mjanulaitis</div>
<div class="t" style="left:388.90px;top:46.44px;font-size:5.6px;transform:scaleX(0.765);color:#303030;font-weight:normal;white-space:pre">CORNERBOWLSOFTW</div>
<div class="t" style="left:13.00px;top:53.94px;font-size:5.6px;transform:scaleX(0.81);color:#303030;font-weight:normal;white-space:pre">A user account was enabled.</div>
<svg style="left:2.20px;top:64.40px" width="7" height="5" viewBox="0 0 7 5"><circle cx="1.6" cy="2.1" r="1.2" fill="none" stroke="#2e8b35" stroke-width="1.15"/><path d="M2.8 2.1H6.6M5 2.1V3.9M6.2 2.1V3.5" stroke="#2e8b35" stroke-width="1"/></svg>
<div class="t" style="left:13.00px;top:65.14px;font-size:5.6px;transform:scaleX(0.81);color:#303030;font-weight:normal;white-space:pre">Success Audit</div>
<div class="t" style="left:47.60px;top:65.14px;font-size:5.6px;transform:scaleX(0.81);color:#303030;font-weight:normal;white-space:pre">server2016dc-2...</div>
<div class="t" style="left:90.50px;top:65.14px;font-size:5.6px;transform:scaleX(0.81);color:#303030;font-weight:normal;white-space:pre">10/31/2021 09:17:27.270 AM</div>
<div class="t" style="left:155.40px;top:65.14px;font-size:5.6px;transform:scaleX(0.81);color:#303030;font-weight:normal;white-space:pre">4738</div>
<div class="t" style="left:180.20px;top:65.14px;font-size:5.6px;transform:scaleX(0.81);color:#303030;font-weight:normal;white-space:pre">A user account was changed</div>
<div class="t" style="left:263.20px;top:65.14px;font-size:5.6px;transform:scaleX(0.81);color:#303030;font-weight:normal;white-space:pre">reduser</div>
<div class="t" style="left:284.40px;top:65.14px;font-size:5.6px;transform:scaleX(0.765);color:#303030;font-weight:normal;white-space:pre">CORNERBOWLSOFTW</div>
<div class="t" style="left:336.70px;top:65.14px;font-size:5.6px;transform:scaleX(0.81);color:#303030;font-weight:normal;white-space:pre">mjanulaitis</div>
<div class="t" style="left:388.90px;top:65.14px;font-size:5.6px;transform:scaleX(0.765);color:#303030;font-weight:normal;white-space:pre">CORNERBOWLSOFTW</div>
<div class="t" style="left:13.00px;top:72.64px;font-size:5.6px;transform:scaleX(0.81);color:#303030;font-weight:normal;white-space:pre">A user account was changed.</div>
<svg style="left:2.20px;top:83.10px" width="7" height="5" viewBox="0 0 7 5"><circle cx="1.6" cy="2.1" r="1.2" fill="none" stroke="#2e8b35" stroke-width="1.15"/><path d="M2.8 2.1H6.6M5 2.1V3.9M6.2 2.1V3.5" stroke="#2e8b35" stroke-width="1"/></svg>
<div class="t" style="left:13.00px;top:83.84px;font-size:5.6px;transform:scaleX(0.81);color:#303030;font-weight:normal;white-space:pre">Success Audit</div>
<div class="t" style="left:47.60px;top:83.84px;font-size:5.6px;transform:scaleX(0.81);color:#303030;font-weight:normal;white-space:pre">server2016dc-2...</div>
<div class="t" style="left:90.50px;top:83.84px;font-size:5.6px;transform:scaleX(0.81);color:#303030;font-weight:normal;white-space:pre">10/31/2021 09:17:27.270 AM</div>
<div class="t" style="left:155.40px;top:83.84px;font-size:5.6px;transform:scaleX(0.81);color:#303030;font-weight:normal;white-space:pre">4738</div>
<div class="t" style="left:180.20px;top:83.84px;font-size:5.6px;transform:scaleX(0.81);color:#303030;font-weight:normal;white-space:pre">A user account was changed</div>
<div class="t" style="left:263.20px;top:83.84px;font-size:5.6px;transform:scaleX(0.81);color:#303030;font-weight:normal;white-space:pre">reduser</div>
<div class="t" style="left:284.40px;top:83.84px;font-size:5.6px;transform:scaleX(0.765);color:#303030;font-weight:normal;white-space:pre">CORNERBOWLSOFTW</div>
<div class="t" style="left:336.70px;top:83.84px;font-size:5.6px;transform:scaleX(0.81);color:#303030;font-weight:normal;white-space:pre">mjanulaitis</div>
<div class="t" style="left:388.90px;top:83.84px;font-size:5.6px;transform:scaleX(0.765);color:#303030;font-weight:normal;white-space:pre">CORNERBOWLSOFTW</div>
<div class="t" style="left:13.00px;top:91.34px;font-size:5.6px;transform:scaleX(0.81);color:#303030;font-weight:normal;white-space:pre">A user account was changed.</div>
<svg style="left:2.20px;top:101.80px" width="7" height="5" viewBox="0 0 7 5"><circle cx="1.6" cy="2.1" r="1.2" fill="none" stroke="#2e8b35" stroke-width="1.15"/><path d="M2.8 2.1H6.6M5 2.1V3.9M6.2 2.1V3.5" stroke="#2e8b35" stroke-width="1"/></svg>
<div class="t" style="left:13.00px;top:102.54px;font-size:5.6px;transform:scaleX(0.81);color:#303030;font-weight:normal;white-space:pre">Success Audit</div>
<div class="t" style="left:47.60px;top:102.54px;font-size:5.6px;transform:scaleX(0.81);color:#303030;font-weight:normal;white-space:pre">server2016dc-2...</div>
<div class="t" style="left:90.50px;top:102.54px;font-size:5.6px;transform:scaleX(0.81);color:#303030;font-weight:normal;white-space:pre">10/31/2021 09:17:27.267 AM</div>
<div class="t" style="left:155.40px;top:102.54px;font-size:5.6px;transform:scaleX(0.81);color:#303030;font-weight:normal;white-space:pre">4724</div>
<div class="t" style="left:180.20px;top:102.54px;font-size:5.6px;transform:scaleX(0.81);color:#303030;font-weight:normal;white-space:pre">An attempt was made to reset an a...</div>
<div class="t" style="left:263.20px;top:102.54px;font-size:5.6px;transform:scaleX(0.81);color:#303030;font-weight:normal;white-space:pre">reduser</div>
<div class="t" style="left:284.40px;top:102.54px;font-size:5.6px;transform:scaleX(0.765);color:#303030;font-weight:normal;white-space:pre">CORNERBOWLSOFTW</div>
<div class="t" style="left:336.70px;top:102.54px;font-size:5.6px;transform:scaleX(0.81);color:#303030;font-weight:normal;white-space:pre">mjanulaitis</div>
<div class="t" style="left:388.90px;top:102.54px;font-size:5.6px;transform:scaleX(0.765);color:#303030;font-weight:normal;white-space:pre">CORNERBOWLSOFTW</div>
<div class="t" style="left:13.00px;top:110.04px;font-size:5.6px;transform:scaleX(0.81);color:#303030;font-weight:normal;white-space:pre">An attempt was made to reset an account&#x27;s password.</div>
<svg style="left:2.20px;top:120.50px" width="7" height="5" viewBox="0 0 7 5"><circle cx="1.6" cy="2.1" r="1.2" fill="none" stroke="#2e8b35" stroke-width="1.15"/><path d="M2.8 2.1H6.6M5 2.1V3.9M6.2 2.1V3.5" stroke="#2e8b35" stroke-width="1"/></svg>
<div class="t" style="left:13.00px;top:121.24px;font-size:5.6px;transform:scaleX(0.81);color:#303030;font-weight:normal;white-space:pre">Success Audit</div>
<div class="t" style="left:47.60px;top:121.24px;font-size:5.6px;transform:scaleX(0.81);color:#303030;font-weight:normal;white-space:pre">server2016dc-2...</div>
<div class="t" style="left:90.50px;top:121.24px;font-size:5.6px;transform:scaleX(0.81);color:#303030;font-weight:normal;white-space:pre">10/31/2021 09:17:27.267 AM</div>
<div class="t" style="left:155.40px;top:121.24px;font-size:5.6px;transform:scaleX(0.81);color:#303030;font-weight:normal;white-space:pre">4738</div>
<div class="t" style="left:180.20px;top:121.24px;font-size:5.6px;transform:scaleX(0.81);color:#303030;font-weight:normal;white-space:pre">A user account was changed</div>
<div class="t" style="left:263.20px;top:121.24px;font-size:5.6px;transform:scaleX(0.81);color:#303030;font-weight:normal;white-space:pre">reduser</div>
<div class="t" style="left:284.40px;top:121.24px;font-size:5.6px;transform:scaleX(0.765);color:#303030;font-weight:normal;white-space:pre">CORNERBOWLSOFTW</div>
<div class="t" style="left:336.70px;top:121.24px;font-size:5.6px;transform:scaleX(0.82);color:#303030;font-weight:normal;white-space:pre">ANONYMOUS LOGON</div>
<div class="t" style="left:388.90px;top:121.24px;font-size:5.6px;transform:scaleX(0.82);color:#303030;font-weight:normal;white-space:pre">NT AUTHORITY</div>
<div class="t" style="left:13.00px;top:128.74px;font-size:5.6px;transform:scaleX(0.81);color:#303030;font-weight:normal;white-space:pre">A user account was changed.</div>
<svg style="left:2.20px;top:139.20px" width="7" height="5" viewBox="0 0 7 5"><circle cx="1.6" cy="2.1" r="1.2" fill="none" stroke="#2e8b35" stroke-width="1.15"/><path d="M2.8 2.1H6.6M5 2.1V3.9M6.2 2.1V3.5" stroke="#2e8b35" stroke-width="1"/></svg>
<div class="t" style="left:13.00px;top:139.94px;font-size:5.6px;transform:scaleX(0.81);color:#303030;font-weight:normal;white-space:pre">Success Audit</div>
<div class="t" style="left:47.60px;top:139.94px;font-size:5.6px;transform:scaleX(0.81);color:#303030;font-weight:normal;white-space:pre">server2016dc-2...</div>
<div class="t" style="left:90.50px;top:139.94px;font-size:5.6px;transform:scaleX(0.81);color:#303030;font-weight:normal;white-space:pre">10/31/2021 09:17:27.233 AM</div>
<div class="t" style="left:155.40px;top:139.94px;font-size:5.6px;transform:scaleX(0.81);color:#303030;font-weight:normal;white-space:pre">4720</div>
<div class="t" style="left:180.20px;top:139.94px;font-size:5.6px;transform:scaleX(0.81);color:#303030;font-weight:normal;white-space:pre">A user account was created</div>
<div class="t" style="left:263.20px;top:139.94px;font-size:5.6px;transform:scaleX(0.81);color:#303030;font-weight:normal;white-space:pre">reduser</div>
<div class="t" style="left:284.40px;top:139.94px;font-size:5.6px;transform:scaleX(0.765);color:#303030;font-weight:normal;white-space:pre">CORNERBOWLSOFTW</div>
<div class="t" style="left:336.70px;top:139.94px;font-size:5.6px;transform:scaleX(0.81);color:#303030;font-weight:normal;white-space:pre">mjanulaitis</div>
<div class="t" style="left:388.90px;top:139.94px;font-size:5.6px;transform:scaleX(0.765);color:#303030;font-weight:normal;white-space:pre">CORNERBOWLSOFTW</div>
<div class="t" style="left:13.00px;top:147.44px;font-size:5.6px;transform:scaleX(0.81);color:#303030;font-weight:normal;white-space:pre">A user account was created.</div>
<svg style="left:2.20px;top:157.90px" width="7" height="5" viewBox="0 0 7 5"><circle cx="1.6" cy="2.1" r="1.2" fill="none" stroke="#2e8b35" stroke-width="1.15"/><path d="M2.8 2.1H6.6M5 2.1V3.9M6.2 2.1V3.5" stroke="#2e8b35" stroke-width="1"/></svg>
<div class="t" style="left:13.00px;top:158.64px;font-size:5.6px;transform:scaleX(0.81);color:#303030;font-weight:normal;white-space:pre">Success Audit</div>
<div class="t" style="left:47.60px;top:158.64px;font-size:5.6px;transform:scaleX(0.81);color:#303030;font-weight:normal;white-space:pre">server2016dc-2...</div>
<div class="t" style="left:90.50px;top:158.64px;font-size:5.6px;transform:scaleX(0.81);color:#303030;font-weight:normal;white-space:pre">10/31/2021 09:17:14.180 AM</div>
<div class="t" style="left:155.40px;top:158.64px;font-size:5.6px;transform:scaleX(0.81);color:#303030;font-weight:normal;white-space:pre">4726</div>
<div class="t" style="left:180.20px;top:158.64px;font-size:5.6px;transform:scaleX(0.81);color:#303030;font-weight:normal;white-space:pre">A user account was deleted</div>
<div class="t" style="left:263.20px;top:158.64px;font-size:5.6px;transform:scaleX(0.81);color:#303030;font-weight:normal;white-space:pre">reduser</div>
<div class="t" style="left:284.40px;top:158.64px;font-size:5.6px;transform:scaleX(0.765);color:#303030;font-weight:normal;white-space:pre">CORNERBOWLSOFTW</div>
<div class="t" style="left:336.70px;top:158.64px;font-size:5.6px;transform:scaleX(0.81);color:#303030;font-weight:normal;white-space:pre">mjanulaitis</div>
<div class="t" style="left:388.90px;top:158.64px;font-size:5.6px;transform:scaleX(0.765);color:#303030;font-weight:normal;white-space:pre">CORNERBOWLSOFTW</div>
<div class="t" style="left:13.00px;top:166.14px;font-size:5.6px;transform:scaleX(0.81);color:#303030;font-weight:normal;white-space:pre">A user account was deleted.</div>
<div style="left:0.5px;top:173.7px;width:440.1px;height:17.9px;background:#d32f2f"></div>
<svg style="left:2.60px;top:176.10px" width="6" height="6" viewBox="0 0 6 6"><rect x="0.8" y="2.4" width="4.4" height="3.4" fill="#e8963c"/><path d="M1.8 2.6V1.5A1.2 1.2 0 0 1 4.2 1.5V2.6" stroke="#e8963c" stroke-width="0.7" fill="none"/></svg>
<div class="t" style="left:13.00px;top:177.34px;font-size:5.6px;transform:scaleX(0.81);color:#fff;font-weight:normal;white-space:pre">Failure Audit</div>
<div class="t" style="left:47.60px;top:177.34px;font-size:5.6px;transform:scaleX(0.81);color:#fff;font-weight:normal;white-space:pre">server2016dc-2...</div>
<div class="t" style="left:90.50px;top:177.34px;font-size:5.6px;transform:scaleX(0.81);color:#fff;font-weight:normal;white-space:pre">10/31/2021 09:17:11.997 AM</div>
<div class="t" style="left:155.40px;top:177.34px;font-size:5.6px;transform:scaleX(0.81);color:#fff;font-weight:normal;white-space:pre">4724</div>
<div class="t" style="left:180.20px;top:177.34px;font-size:5.6px;transform:scaleX(0.81);color:#fff;font-weight:normal;white-space:pre">An attempt was made to reset an a...</div>
<div class="t" style="left:263.20px;top:177.34px;font-size:5.6px;transform:scaleX(0.81);color:#fff;font-weight:normal;white-space:pre">reduser</div>
<div class="t" style="left:284.40px;top:177.34px;font-size:5.6px;transform:scaleX(0.765);color:#fff;font-weight:normal;white-space:pre">CORNERBOWLSOFTW</div>
<div class="t" style="left:336.70px;top:177.34px;font-size:5.6px;transform:scaleX(0.81);color:#fff;font-weight:normal;white-space:pre">mjanulaitis</div>
<div class="t" style="left:388.90px;top:177.34px;font-size:5.6px;transform:scaleX(0.765);color:#fff;font-weight:normal;white-space:pre">CORNERBOWLSOFTW</div>
<div class="t" style="left:13.00px;top:184.84px;font-size:5.6px;transform:scaleX(0.81);color:#fff;font-weight:normal;white-space:pre">An attempt was made to reset an account&#x27;s password.</div>
<svg style="left:2.20px;top:195.30px" width="7" height="5" viewBox="0 0 7 5"><circle cx="1.6" cy="2.1" r="1.2" fill="none" stroke="#2e8b35" stroke-width="1.15"/><path d="M2.8 2.1H6.6M5 2.1V3.9M6.2 2.1V3.5" stroke="#2e8b35" stroke-width="1"/></svg>
<div class="t" style="left:13.00px;top:196.04px;font-size:5.6px;transform:scaleX(0.81);color:#303030;font-weight:normal;white-space:pre">Success Audit</div>
<div class="t" style="left:47.60px;top:196.04px;font-size:5.6px;transform:scaleX(0.81);color:#303030;font-weight:normal;white-space:pre">server2016dc-2...</div>
<div class="t" style="left:90.50px;top:196.04px;font-size:5.6px;transform:scaleX(0.81);color:#303030;font-weight:normal;white-space:pre">10/31/2021 09:17:11.980 AM</div>
<div class="t" style="left:155.40px;top:196.04px;font-size:5.6px;transform:scaleX(0.81);color:#303030;font-weight:normal;white-space:pre">4720</div>
<div class="t" style="left:180.20px;top:196.04px;font-size:5.6px;transform:scaleX(0.81);color:#303030;font-weight:normal;white-space:pre">A user account was created</div>
<div class="t" style="left:263.20px;top:196.04px;font-size:5.6px;transform:scaleX(0.81);color:#303030;font-weight:normal;white-space:pre">reduser</div>
<div class="t" style="left:284.40px;top:196.04px;font-size:5.6px;transform:scaleX(0.765);color:#303030;font-weight:normal;white-space:pre">CORNERBOWLSOFTW</div>
<div class="t" style="left:336.70px;top:196.04px;font-size:5.6px;transform:scaleX(0.81);color:#303030;font-weight:normal;white-space:pre">mjanulaitis</div>
<div class="t" style="left:388.90px;top:196.04px;font-size:5.6px;transform:scaleX(0.765);color:#303030;font-weight:normal;white-space:pre">CORNERBOWLSOFTW</div>
<div class="t" style="left:13.00px;top:203.54px;font-size:5.6px;transform:scaleX(0.81);color:#303030;font-weight:normal;white-space:pre">A user account was created.</div>
</div>
<svg style="left:603.5px;top:116px" width="5" height="210" viewBox="0 0 5 210"><path d="M0.8 3.8L2.5 2.2L4.2 3.8" stroke="#888" stroke-width="0.5" fill="none"/><path d="M0.8 205.2L2.5 206.8L4.2 205.2" stroke="#888" stroke-width="0.5" fill="none"/></svg>
<div style="left:605px;top:122px;width:2px;height:169px;background:#cdcfd2;border-radius:1px"></div>
<svg style="left:164px;top:327px" width="440" height="4" viewBox="0 0 440 4"><path d="M2.6 0.5L1.2 2L2.6 3.5" stroke="#888" stroke-width="0.5" fill="none"/><path d="M434.6 0.5L436 2L434.6 3.5" stroke="#888" stroke-width="0.5" fill="none"/></svg>
<div style="left:170px;top:328.5px;width:426px;height:1.3px;background:#c6c8cb;border-radius:1px"></div>
<div style="left:156px;top:452px;width:457px;height:11px;background:#eeeff1"></div>
<div style="left:156px;top:451.2px;width:457px;height:0.8px;background:#dfe1e4"></div>
<div style="left:160.8px;top:335px;width:448.7px;height:116.2px;background:#f6f7f8"></div>
<div style="left:160.8px;top:335.3px;width:448.7px;height:0.6px;background:#e2e6ea"></div>
<div style="left:161.4px;top:335.9px;width:447.5px;height:8.9px;background:#eceef1"></div>
<div style="left:161.4px;top:439.2px;width:447.5px;height:8.8px;background:#eceef0"></div>
<div class="t" style="left:164.70px;top:337.84px;font-size:5.6px;transform:scaleX(0.81);color:#444;font-weight:normal;">Message</div>
<div style="left:184px;top:339.4px;width:403px;height:1.6px;background:#e0e2e5"></div>
<svg style="left:588.5px;top:338.5px" width="19" height="4" viewBox="0 0 19 4"><path d="M0.5 1L2 2.5L3.5 1" stroke="#777" stroke-width="0.5" fill="none"/><rect x="8.3" y="0.5" width="1.2" height="3" fill="#777"/><path d="M14.5 0.5L17.5 3.5M17.5 0.5L14.5 3.5" stroke="#666" stroke-width="0.5"/></svg>
<div style="left:165.4px;top:347.1px;width:441.4px;height:89.5px;background:#fff;border:0.6px solid #dcdcdc;box-sizing:border-box"></div>
<div class="t" style="left:168.00px;top:349.24px;font-size:5.6px;transform:scaleX(0.81);color:#303030;font-weight:normal;white-space:pre">An attempt was made to reset an account&#x27;s password.</div>
<div class="t" style="left:168.00px;top:361.44px;font-size:5.6px;transform:scaleX(0.81);color:#303030;font-weight:normal;white-space:pre">Subject:</div>
<div class="t" style="left:186.80px;top:367.44px;font-size:5.6px;transform:scaleX(0.81);color:#303030;font-weight:normal;white-space:pre">Security ID:</div>
<div class="t" style="left:186.80px;top:373.54px;font-size:5.6px;transform:scaleX(0.81);color:#303030;font-weight:normal;white-space:pre">Account Name:</div>
<div class="t" style="left:186.80px;top:379.74px;font-size:5.6px;transform:scaleX(0.81);color:#303030;font-weight:normal;white-space:pre">Account Domain:</div>
<div class="t" style="left:186.80px;top:386.14px;font-size:5.6px;transform:scaleX(0.81);color:#303030;font-weight:normal;white-space:pre">Logon ID:</div>
<div class="t" style="left:242.80px;top:367.44px;font-size:5.6px;transform:scaleX(0.89);color:#303030;font-weight:normal;white-space:pre">S-1-5-21-3493514534-3775928846-3797730324-500</div>
<div class="t" style="left:242.80px;top:373.54px;font-size:5.6px;transform:scaleX(0.81);color:#303030;font-weight:normal;white-space:pre">mjanulaitis</div>
<div class="t" style="left:242.80px;top:379.74px;font-size:5.6px;transform:scaleX(0.765);color:#303030;font-weight:normal;white-space:pre">CORNERBOWLSOFTW</div>
<div class="t" style="left:242.80px;top:386.14px;font-size:5.6px;transform:scaleX(0.81);color:#303030;font-weight:normal;white-space:pre">0x5008FF4</div>
<div class="t" style="left:168.00px;top:398.74px;font-size:5.6px;transform:scaleX(0.81);color:#303030;font-weight:normal;white-space:pre">Target Account:</div>
<div class="t" style="left:186.80px;top:404.74px;font-size:5.6px;transform:scaleX(0.81);color:#303030;font-weight:normal;white-space:pre">Security ID:</div>
<div class="t" style="left:186.80px;top:410.94px;font-size:5.6px;transform:scaleX(0.81);color:#303030;font-weight:normal;white-space:pre">Account Name:</div>
<div class="t" style="left:186.80px;top:417.24px;font-size:5.6px;transform:scaleX(0.81);color:#303030;font-weight:normal;white-space:pre">Account Domain:</div>
<div class="t" style="left:242.80px;top:404.74px;font-size:5.6px;transform:scaleX(0.89);color:#303030;font-weight:normal;white-space:pre">S-1-5-21-3493514534-3775928846-3797730324-42601</div>
<div class="t" style="left:242.80px;top:410.94px;font-size:5.6px;transform:scaleX(0.81);color:#303030;font-weight:normal;white-space:pre">reduser</div>
<div class="t" style="left:242.80px;top:417.24px;font-size:5.6px;transform:scaleX(0.765);color:#303030;font-weight:normal;white-space:pre">CORNERBOWLSOFTW</div>
<div style="left:163px;top:438.6px;width:21px;height:8.4px;background:#fff"></div>
<div class="t" style="left:164.00px;top:441.54px;font-size:5.6px;transform:scaleX(0.81);color:#cc4444;font-weight:normal;">Message</div>
<div class="t" style="left:187.00px;top:441.54px;font-size:5.6px;transform:scaleX(0.81);color:#444;font-weight:normal;">Verbose Output</div>
<div style="left:0px;top:0px;width:616px;height:1px;background:#b0b0b0"></div>
<div style="left:0px;top:0px;width:1.1px;height:464px;background:#b4b8b4"></div>
<div style="left:0px;top:463px;width:616px;height:1px;background:#8a8a8a"></div>
</div></body></html>
